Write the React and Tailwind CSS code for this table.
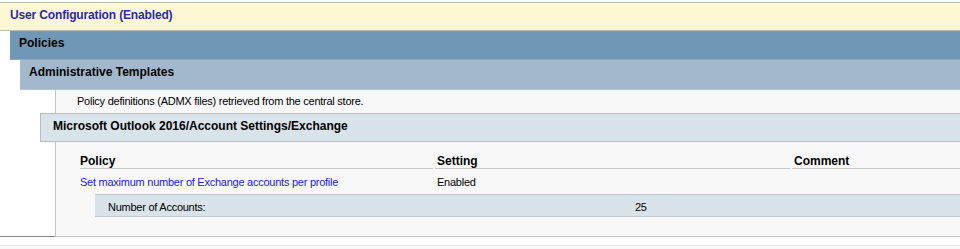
export default function App() {
  return (
    <div className="w-[960px] h-[249px] bg-white text-[12px] text-black font-['Liberation_Sans',Arial,sans-serif] leading-none">
      <div className="h-[2px] bg-white" />

      {/* GPO section header */}
      <div className="h-[29px] bg-[#fdf7d4] border-t border-b border-[#bdbcb4] pl-[10px] pt-[6px] font-bold text-[#2b2ba8] tracking-[-0.15px]">
        User Configuration (Enabled)
      </div>

      <div className="ml-[10px]">
        <div className="h-[29px] bg-[#7097b5] border-b border-[#8fa6b8] pl-[9px] pt-[6px] font-bold">
          Policies
        </div>

        <div className="ml-[10px]">
          <div className="h-[30px] bg-[#a2b8cc] border-b border-[#b3c3d0] pl-[9px] pt-[6px] font-bold">
            Administrative Templates
          </div>

          <div className="ml-[35px] border-l border-[#c4c4c4] bg-[#f8f8f8]">
            <div className="h-[23px] pl-[21px] pt-[6px] text-[11px] tracking-[-0.25px]">
              Policy definitions (ADMX files) retrieved from the central store.
            </div>

            <div className="-ml-[16px] h-[29px] bg-[#d9e3ea] border border-r-0 border-[#b8bcbf] pl-[12px] pt-[6px] font-bold">
              Microsoft Outlook 2016/Account Settings/Exchange
            </div>

            <div className="pl-[24px] h-[94px]">
              <div className="flex h-[27px] items-end">
                <div className="w-[353px] h-full border-b border-[#c8c8c8] pt-[13px] font-bold">Policy</div>
                <div className="w-[2px]" />
                <div className="w-[355px] h-full border-b border-[#c8c8c8] pt-[13px] pl-[2px] font-bold">Setting</div>
                <div className="w-[2px]" />
                <div className="flex-1 h-full border-b border-[#c8c8c8] pt-[13px] pl-[2px] font-bold">Comment</div>
              </div>
              <div className="flex h-[25px] text-[11px] tracking-[-0.25px] pt-[8px]">
                <div className="w-[357px] text-[#1a1adc]">Set maximum number of Exchange accounts per profile</div>
                <div>Enabled</div>
              </div>
              <div className="ml-[15px] flex h-[23px] bg-[#d9e3ea] border-t border-b border-[#c2c7cb] pl-[13px] pt-[7px] text-[11px] tracking-[-0.25px]">
                <div className="w-[527px]">Number of Accounts:</div>
                <div>25</div>
              </div>
            </div>
          </div>
        </div>
      </div>

      <div className="flex h-px">
        <div className="w-[55px] bg-[#8a8a8a]" />
        <div className="flex-1 bg-[#c6c6c6]" />
      </div>
      <div className="h-[8px] bg-white" />
      <div className="h-px bg-[#ececec]" />
      <div className="h-[3px] bg-[#f8f8f8]" />
    </div>
  );
}
